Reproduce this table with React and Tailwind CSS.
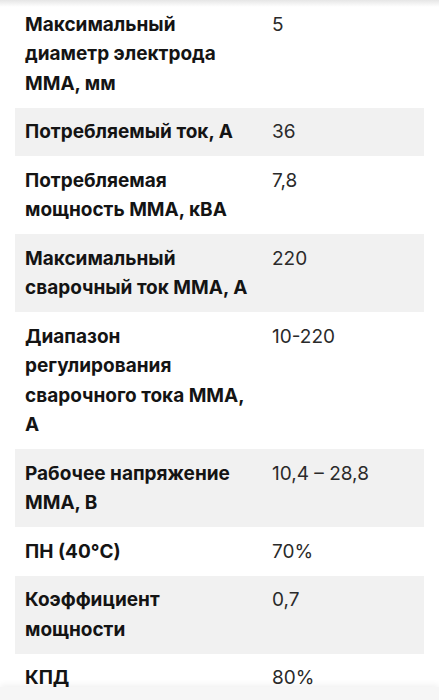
const specs = [
  ['Максимальный диаметр электрода ММА, мм', '5'],
  ['Потребляемый ток, А', '36'],
  ['Потребляемая мощность ММА, кВА', '7,8'],
  ['Максимальный сварочный ток ММА, А', '220'],
  ['Диапазон регулирования сварочного тока ММА, А', '10-220'],
  ['Рабочее напряжение ММА, В', '10,4 – 28,8'],
  ['ПН (40°C)', '70%'],
  ['Коэффициент мощности', '0,7'],
  ['КПД', '80%'],
];

export default function App() {
  return (
    <div className="relative h-[700px] overflow-hidden bg-white font-['Inter','Noto_Sans',sans-serif]">
      {/* тень от шапки */}
      <div className="pointer-events-none absolute inset-x-0 top-0 z-10 h-[7px] bg-gradient-to-b from-[#e6e6e6] to-white/0" />

      <div className="px-[15px]">
        {specs.map(([label, value], i) => (
          <div
            key={label}
            className={`flex py-[9.5px] pl-[10px] leading-[29.5px] text-[19px] ${
              i % 2 === 1 ? 'bg-[#f1f1f1]' : 'bg-white'
            }`}
          >
            <div className="w-[247px] shrink-0 pr-[14px] font-bold text-[#141414]">
              {label}
            </div>
            <div className="text-[#2a2a2a]">{value}</div>
          </div>
        ))}
      </div>

      {/* нижняя панель */}
      <div className="absolute inset-x-0 top-[687px] h-[20px] bg-[#f6f6f6] shadow-[0_-2px_6px_rgba(0,0,0,0.06)]" />
    </div>
  );
}
